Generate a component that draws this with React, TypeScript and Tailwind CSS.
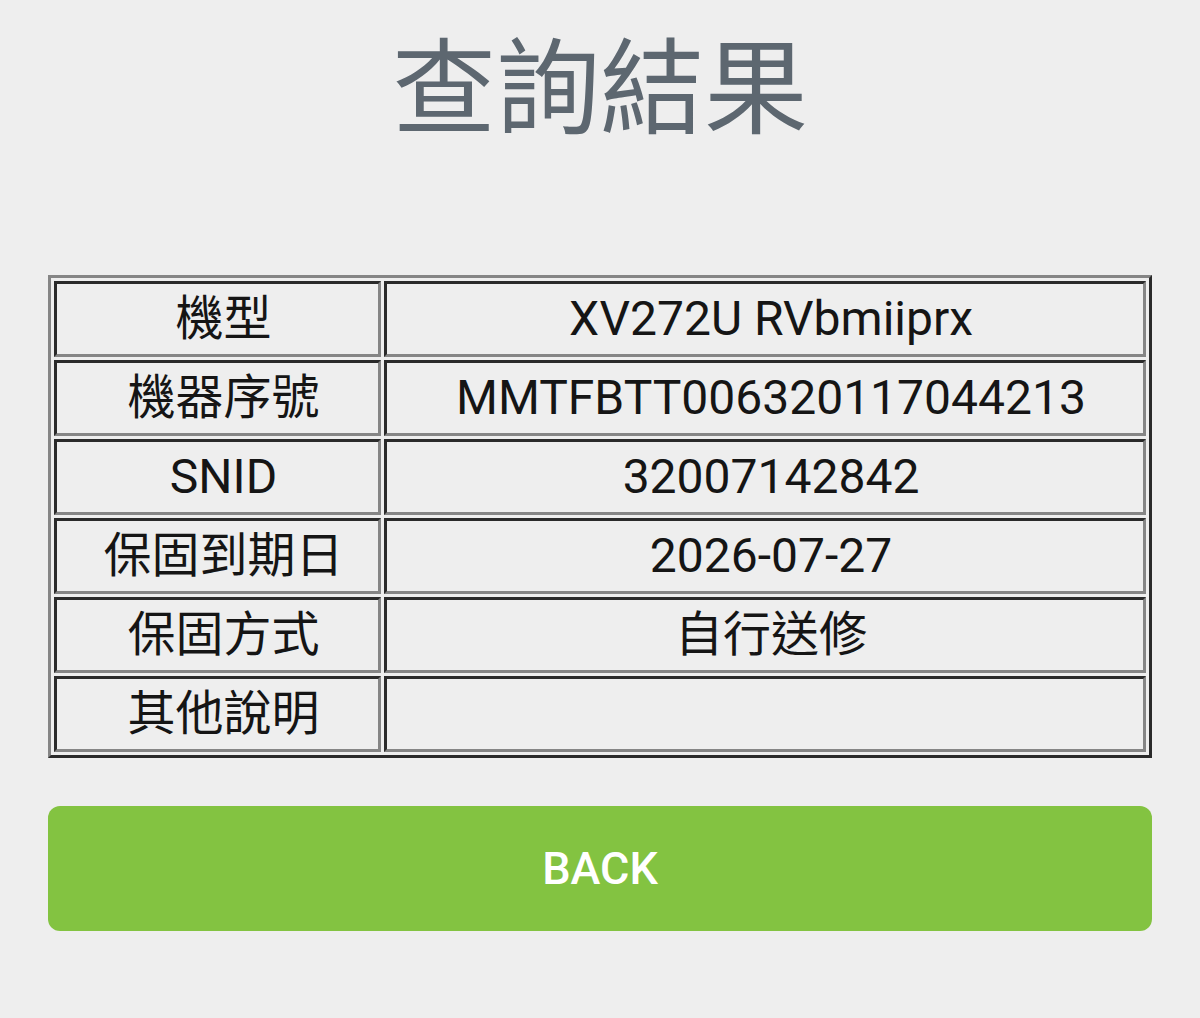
import React from "react";

const rows: [string, string][] = [
  ["機型", "XV272U RVbmiiprx"],
  ["機器序號", "MMTFBTT006320117044213"],
  ["SNID", "32007142842"],
  ["保固到期日", "2026-07-27"],
  ["保固方式", "自行送修"],
  ["其他說明", ""],
];

export default function App() {
  return (
    <div
      className="min-h-[1018px] w-[1200px] bg-[#eeeeee] px-12"
      style={{ fontFamily: 'Roboto, "Noto Sans CJK TC", sans-serif' }}
    >
      <div className="flex h-[175px] items-start justify-center pt-[31px]">
        <h1 className="text-[104px] leading-[1.15] font-normal text-[#5d6770]">
          查詢結果
        </h1>
      </div>
      <div className="pt-[100px]">
        <table className="w-full border-separate border-spacing-[3px] border-[3px] border-t-[#858585] border-l-[#858585] border-r-[#2a2a2a] border-b-[#2a2a2a]">
          <tbody>
            {rows.map(([k, v]) => (
              <tr key={k}>
                <td className="h-[76px] w-[327px] border-[3px] border-t-[#2a2a2a] border-l-[#2a2a2a] border-r-[#858585] border-b-[#858585] p-0 pl-3 text-center align-middle text-[48px] leading-none text-[#151515]">
                  {k}
                </td>
                <td className="h-[76px] border-[3px] border-t-[#2a2a2a] border-l-[#2a2a2a] border-r-[#858585] border-b-[#858585] p-0 pl-3 text-center align-middle text-[48px] leading-none text-[#151515]">
                  {v}
                </td>
              </tr>
            ))}
          </tbody>
        </table>
      </div>
      <div className="pt-12">
        <button className="flex h-[125px] w-full items-center justify-center rounded-xl bg-[#83c341] text-[45px] font-medium text-white">
          BACK
        </button>
      </div>
    </div>
  );
}
